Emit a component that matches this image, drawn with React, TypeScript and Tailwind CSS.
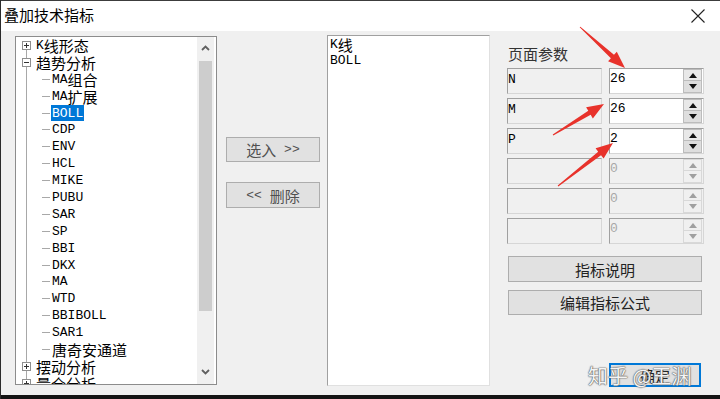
import React from 'react';

const CJK = "font-['Noto_Sans_CJK_SC',sans-serif]";

function Mixed({ text, cjkClass = "text-[15px]", latinClass = "text-[13px]" }: { text: string; cjkClass?: string; latinClass?: string }) {
  const parts = text.match(/[\u3400-\u9fff]+|[^\u3400-\u9fff]+/g) || [];
  return (
    <>
      {parts.map((p, i) =>
        /[\u3400-\u9fff]/.test(p) ? (
          <span key={i} className={`font-['Noto_Sans_CJK_SC',sans-serif] leading-none ${cjkClass}`}>{p}</span>
        ) : (
          <span key={i} className={`font-['Liberation_Mono',monospace] leading-none whitespace-pre ${latinClass}`}>{p}</span>
        )
      )}
    </>
  );
}

type Row = { t: string; kind: 'root' | 'child'; icon?: '+' | '-'; first?: boolean; last?: boolean; sel?: boolean };

const tree: Row[] = [
  { t: 'K线形态', kind: 'root', icon: '+', first: true },
  { t: '趋势分析', kind: 'root', icon: '-' },
  { t: 'MA组合', kind: 'child' },
  { t: 'MA扩展', kind: 'child' },
  { t: 'BOLL', kind: 'child', sel: true },
  { t: 'CDP', kind: 'child' },
  { t: 'ENV', kind: 'child' },
  { t: 'HCL', kind: 'child' },
  { t: 'MIKE', kind: 'child' },
  { t: 'PUBU', kind: 'child' },
  { t: 'SAR', kind: 'child' },
  { t: 'SP', kind: 'child' },
  { t: 'BBI', kind: 'child' },
  { t: 'DKX', kind: 'child' },
  { t: 'MA', kind: 'child' },
  { t: 'WTD', kind: 'child' },
  { t: 'BBIBOLL', kind: 'child' },
  { t: 'SAR1', kind: 'child' },
  { t: '唐奇安通道', kind: 'child' },
  { t: '摆动分析', kind: 'root', icon: '+' },
  { t: '量仓分析', kind: 'root', icon: '+', last: true },
];

function TreeRow({ r }: { r: Row }) {
  return (
    <div className="relative h-[16.9px] flex items-center shrink-0">
      {r.kind === 'root' ? (
        <>
          {!r.first && <span className="absolute left-[10px] top-0 h-[4px] w-px bg-[#a8a8a8]" />}
          {!r.last && <span className="absolute left-[10px] bottom-0 h-[4px] w-px bg-[#a8a8a8]" />}
          <span className="absolute left-[6px] top-[4px] w-[9px] h-[9px] border border-[#8f8f8f] bg-white flex items-center justify-center">
            <span className="relative w-[5px] h-px bg-[#333]" />
            {r.icon === '+' && <span className="absolute left-[3px] top-[1px] w-px h-[5px] bg-[#333]" />}
          </span>
          <span className="ml-[20px] flex items-center text-black">
            <Mixed text={r.t} />
          </span>
        </>
      ) : (
        <>
          <span className="absolute left-[10px] top-0 bottom-0 w-px bg-[#a8a8a8]" />
          <span className="absolute left-[26px] top-[8px] w-[8px] h-px bg-[#a8a8a8]" />
          <span className={`ml-[35px] px-px h-full flex items-center ${r.sel ? 'bg-[#0078d7] text-white' : 'text-black'}`}>
            <Mixed text={r.t} />
          </span>
        </>
      )}
    </div>
  );
}

function Chevron({ up }: { up?: boolean }) {
  return (
    <svg width="9" height="6" viewBox="0 0 9 6">
      <path d={up ? 'M1 5 L4.5 1.5 L8 5' : 'M1 1 L4.5 4.5 L8 1'} fill="none" stroke="#606060" strokeWidth="1.8" />
    </svg>
  );
}

function Tri({ up, color }: { up?: boolean; color: string }) {
  return (
    <svg width="8" height="5" viewBox="0 0 8 5">
      <path d={up ? 'M0 5 L4 0 L8 5Z' : 'M0 0 L4 5 L8 0Z'} fill={color} />
    </svg>
  );
}

function ParamRow({ label, value, enabled }: { label: string; value: string; enabled: boolean }) {
  return (
    <div className="flex h-[26px] gap-[7px]">
      <div className="w-[95px] h-full border border-t-[#a0a0a0] border-l-[#a0a0a0] border-r-[#d6d6d6] border-b-[#d6d6d6] bg-[#f0f0f0] text-black">
        <div className="pt-[3px] leading-[16px] font-['Liberation_Mono',monospace] text-[13px]">{label}</div>
      </div>
      <div className={`w-[95px] h-full flex border border-t-[#a0a0a0] border-l-[#a0a0a0] border-r-[#d6d6d6] border-b-[#d6d6d6] ${enabled ? 'bg-white' : 'bg-[#f0f0f0]'}`}>
        <div className={`flex-1 pt-[2px] leading-[16px] font-['Liberation_Mono',monospace] text-[13px] ${enabled ? 'text-black' : 'text-[#a8a8a8]'}`}>{value}</div>
        <div className="w-[19px] flex flex-col mr-[1px]">
          <div className={`h-[12px] flex items-center justify-center border ${enabled ? 'bg-[#e8e8e8] border-[#bcbcbc]' : 'bg-[#f0f0f0] border-[#d8d8d8]'}`}>
            <Tri up color={enabled ? '#111' : '#a0a0a0'} />
          </div>
          <div className={`h-[12px] flex items-center justify-center border border-t-0 ${enabled ? 'bg-[#dedede] border-[#bcbcbc]' : 'bg-[#f0f0f0] border-[#d8d8d8]'}`}>
            <Tri color={enabled ? '#111' : '#a0a0a0'} />
          </div>
        </div>
      </div>
    </div>
  );
}

function arrowPoints(tx: number, ty: number, hx: number, hy: number) {
  const dx = hx - tx, dy = hy - ty;
  const L = Math.hypot(dx, dy);
  const ux = dx / L, uy = dy / L;
  const px = -uy, py = ux;
  const headLen = 17, headW = 6.5, shaftW = 2.3, tailW = 0.5;
  const bx = hx - ux * headLen, by = hy - uy * headLen;
  const pts: [number, number][] = [
    [tx + px * tailW, ty + py * tailW],
    [bx + px * shaftW, by + py * shaftW],
    [bx + px * headW, by + py * headW],
    [hx, hy],
    [bx - px * headW, by - py * headW],
    [bx - px * shaftW, by - py * shaftW],
    [tx - px * tailW, ty - py * tailW],
  ];
  return pts.map((p) => p.join(',')).join(' ');
}

export default function App() {
  return (
    <div className="relative w-[720px] h-[399px] overflow-hidden bg-[#f0f0f0] border-l border-[#2b2b2b] flex flex-col">
      {/* title bar */}
      <div className="h-[31px] shrink-0 bg-white border-t border-[#3c3c3c] flex items-center justify-between">
        <span className={`ml-[3px] mt-[-3px] text-[15px] leading-none text-black ${CJK}`}>叠加技术指标</span>
        <svg className="mr-[15px] mt-[-1px]" width="14" height="14" viewBox="0 0 14 14">
          <path d="M0.5 0.5 L13.5 13.5 M13.5 0.5 L0.5 13.5" stroke="#222" strokeWidth="1.1" />
        </svg>
      </div>

      {/* body */}
      <div className="flex-1 flex items-start">
        {/* tree */}
        <div className="ml-[14px] mt-[5px] w-[202px] h-[349px] border border-[#8c8c8c] bg-white flex overflow-hidden">
          <div className="flex-1 flex flex-col overflow-hidden">
            {tree.map((r, i) => (
              <TreeRow key={i} r={r} />
            ))}
          </div>
          <div className="w-[17px] mr-[2px] bg-[#f0f0f0] flex flex-col">
            <div className="h-[22px] flex items-center justify-center">
              <Chevron up />
            </div>
            <div className="mt-[2px] mx-[2px] h-[250px] bg-[#cdcdcd]" />
            <div className="flex-1" />
            <div className="h-[22px] mb-[1px] flex items-center justify-center">
              <Chevron />
            </div>
          </div>
        </div>

        {/* middle buttons */}
        <div className="w-[110px] flex flex-col">
          <div className="ml-[9px] mt-[106px] w-[94px] h-[25px] bg-[#e1e1e1] border border-[#adadad] flex items-center justify-center text-[#505050]">
            <Mixed text="选入 >>" />
          </div>
          <div className="ml-[9px] mt-[20px] w-[94px] h-[26px] bg-[#e1e1e1] border border-[#adadad] flex items-center justify-center text-[#505050]">
            <Mixed text="<< 删除" />
          </div>
        </div>

        {/* selected list */}
        <div className="mt-[4px] w-[163px] h-[351px] bg-white border border-t-[#a0a0a0] border-l-[#a0a0a0] border-r-[#e0e0e0] border-b-[#e0e0e0] pl-[2px]">
          <div className="h-[16px] flex items-center text-black">
            <Mixed text="K线" />
          </div>
          <div className="h-[16px] flex items-center text-black">
            <Mixed text="BOLL" />
          </div>
        </div>

        {/* params */}
        <div className="ml-[17px] w-[197px] flex flex-col">
          <div className={`mt-[12px] ml-[1px] h-[20px] flex items-center text-[15px] leading-none text-[#333] ${CJK}`}>页面参数</div>
          <div className="mt-[5px] flex flex-col gap-[4px]">
            <ParamRow label="N" value="26" enabled />
            <ParamRow label="M" value="26" enabled />
            <ParamRow label="P" value="2" enabled />
            <ParamRow label="" value="0" enabled={false} />
            <ParamRow label="" value="0" enabled={false} />
            <ParamRow label="" value="0" enabled={false} />
          </div>
          <div className={`mt-[12px] ml-[1px] w-[194px] h-[26px] bg-[#e1e1e1] border border-[#adadad] flex items-center justify-center text-[15px] leading-none text-[#222] ${CJK}`}>指标说明</div>
          <div className={`mt-[8px] ml-[1px] w-[194px] h-[25px] bg-[#e1e1e1] border border-[#adadad] flex items-center justify-center text-[15px] leading-none text-[#222] ${CJK}`}>编辑指标公式</div>
          <div className={`mt-[48px] ml-[102px] w-[92px] h-[24px] bg-[#e1e1e1] border-2 border-[#0078d7] flex items-center justify-center text-[15px] leading-none text-[#222] ${CJK}`}>确定</div>
        </div>
      </div>

      <div className="h-[4px] shrink-0 bg-[#141414]" />

      {/* watermark */}
      <div className={`absolute left-[587px] top-[366px] text-[20px] leading-none text-[#f4f4f4] [text-shadow:0_0_1px_#555,0_0_1px_#555,0_0_2px_#888] pointer-events-none ${CJK}`}>
        知乎 @王渊
      </div>

      {/* annotation arrows */}
      <svg className="absolute left-0 top-0 pointer-events-none" width="720" height="399" viewBox="0 0 720 399">
        <polygon points={arrowPoints(579, 27, 624, 68)} fill="#e8322b" />
        <polygon points={arrowPoints(552, 135, 603, 104)} fill="#e8322b" />
        <polygon points={arrowPoints(557, 186, 612, 143)} fill="#e8322b" />
      </svg>
    </div>
  );
}
